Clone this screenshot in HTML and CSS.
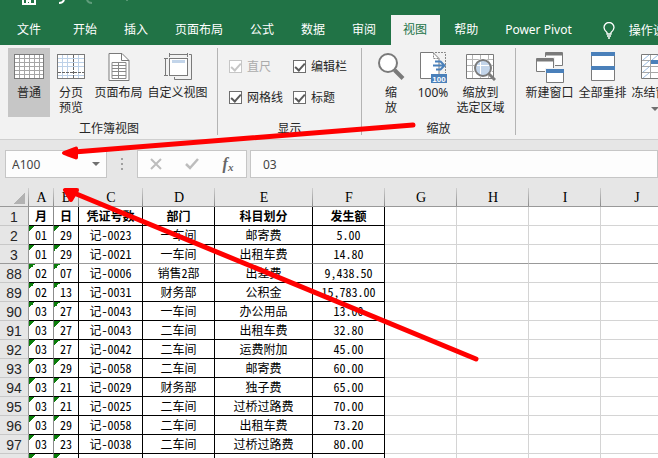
FILE: index.html
```html
<!DOCTYPE html>
<html lang="zh-CN">
<head>
<meta charset="utf-8">
<title>Excel</title>
<link rel="stylesheet" href="styles.css">
</head>
<body>
<div class="app">
  <header class="titlebar">
    <svg class="quick" width="140" height="6" viewBox="0 0 140 6" aria-hidden="true">
      <path d="M23 0V4H35V0M27 4V1H30V4" fill="none" stroke="#fff" stroke-width="2"/>
      <path d="M64 0Q63 3 59 3" fill="none" stroke="#fff" stroke-width="2"/>
      <path d="M87 0Q88 3 92 3" fill="none" stroke="#5f9c7b" stroke-width="2"/>
      <path d="M127 0v1" stroke="#8ab89e" stroke-width="1"/>
    </svg>
  </header>
  <nav class="tabs">
    <button class="tab file">文件</button>
    <button class="tab">开始</button>
    <button class="tab">插入</button>
    <button class="tab">页面布局</button>
    <button class="tab">公式</button>
    <button class="tab">数据</button>
    <button class="tab">审阅</button>
    <button class="tab active">视图</button>
    <button class="tab">帮助</button>
    <button class="tab">Power Pivot</button>
    <button class="tab tell">
      <svg width="12" height="17" viewBox="0 0 12 17" fill="none" stroke="#fff" stroke-width="1.3"><path d="M4 12V10.500Q1 8 1 5.500A5 5 0 0 1 11 5.500Q11 8 8 10.500V12ZM4 14H8M5 16H7"/></svg>
      操作说明搜索
    </button>
  </nav>

  <section class="ribbon">
    <div class="group views">
      <div class="tools">
        <button class="tool pressed">
          <svg width="30" height="33" viewBox="0 0 30 33"><rect x=".5" y="2.500" width="29" height="24" fill="#fff" stroke="#7a7a7a"/><path d="M1 6.500H29M1 10.500H29M1 14.500H29M1 18.500H29M1 22.500H29M5.500 3V26M10.500 3V26M15.500 3V26M20.500 3V26M25.500 3V26" stroke="#a6a6a6"/></svg>
          <span>普通</span>
        </button>
        <button class="tool">
          <svg width="28" height="33" viewBox="0 0 28 33"><rect x=".5" y="2.500" width="27" height="24" fill="#fff" stroke="#7a7a7a"/><path d="M1 6.500H27M1 10.500H27M1 14.500H27M1 23.500H27M5.500 3V26M10.500 3V26M21.500 3V26" stroke="#bdd1e8"/><path d="M1 20.500H27M16.500 3V26" stroke="#666" stroke-dasharray="3 1"/></svg>
          <span>分页<br>预览</span>
        </button>
        <button class="tool mid">
          <svg width="22" height="33" viewBox="0 0 22 33"><path d="M1 1.500H14L21 8.500V28.500H1Z" fill="#fff" stroke="#7a7a7a"/><path d="M13.500 1.500V8.500H21" fill="none" stroke="#7a7a7a"/><path d="M4 10.500H18V26.500H4ZM4 13.500H18M4 16.500H18M4 19.500H18M4 23.500H18M10.500 11V26" fill="none" stroke="#8a8a8a"/></svg>
          <span>页面布局</span>
        </button>
        <button class="tool wide">
          <svg width="28" height="33" viewBox="0 0 28 33"><rect x="5.500" y="6.500" width="18" height="17" fill="#fff" stroke="#7a7a7a"/><path d="M8 8H21V11H8Z" fill="#c3d5ea"/><path d="M5.500 1V5M23.500 1V5M5.500 2.500H23.500M0 6.500H4M0 23.500H4M1.500 6.500V23.500M25 2.500H27.500V27.500H10.500V25" fill="none" stroke="#7a7a7a"/></svg>
          <span>自定义视图</span>
        </button>
      </div>
      <h2>工作簿视图</h2>
    </div>

    <div class="group show">
      <div class="checks">
        <label class="off"><input type="checkbox" checked disabled>直尺</label>
        <label><input type="checkbox" checked>编辑栏</label>
        <label><input type="checkbox" checked>网格线</label>
        <label><input type="checkbox" checked>标题</label>
      </div>
      <h2>显示</h2>
    </div>

    <div class="group zoom">
      <div class="tools">
        <button class="tool">
          <svg width="28" height="33" viewBox="0 0 28 33"><circle cx="11" cy="11" r="9" fill="#fff" stroke="#7a7a7a" stroke-width="2"/><path d="M17.500 18L26 26.500" stroke="#7a7a7a" stroke-width="4"/></svg>
          <span>缩<br>放</span>
        </button>
        <button class="tool">
          <svg width="28" height="33" viewBox="0 0 28 33"><path d="M1.500 .5H14L20 6.500V26.500H1.500Z" fill="#fff" stroke="#7a7a7a"/><path d="M14.500 .5V6.500H20M16 .5H26.500V21" fill="none" stroke="#888" stroke-dasharray="2 1"/><path d="M16 9.500H21M14 13.500H25M17 17.500H21M21 9L25.500 13.500L21 18" fill="none" stroke="#4a80ba" stroke-width="2"/><rect x="12" y="22" width="16" height="9" fill="#4a80ba"/><text x="20" y="29.500" text-anchor="middle" class="badge">100</text></svg>
          <span>100%</span>
        </button>
        <button class="tool mid">
          <svg width="30" height="33" viewBox="0 0 30 33"><path d="M.5 2.500H27.500V26.500H.5Z" fill="#fff" stroke="#7a7a7a"/><path d="M1 7.500H27M1 13.500H27M1 19.500H27M6.500 3V26M14.500 3V26M22.500 3V26" stroke="#b5b5b5"/><circle cx="17" cy="16" r="7.500" fill="#c3d5ea" stroke="#fff" stroke-width="4"/><path d="M22 21L29 28" stroke="#7a7a7a" stroke-width="3"/><circle cx="17" cy="16" r="8" fill="#c3d5ea" stroke="#7a7a7a" stroke-width="2"/><path d="M11 13.500H23M14.500 10V22" stroke="#fff"/></svg>
          <span>缩放到<br>选定区域</span>
        </button>
      </div>
      <h2>缩放</h2>
    </div>

    <div class="group window">
      <div class="tools">
        <button class="tool mid">
          <svg width="28" height="33" viewBox="0 0 28 33"><g fill="#fff" stroke="#7a7a7a"><path d="M9.500 .5H26.500V13.500H9.500Z"/><path d="M10 2H26" stroke-width="3"/><path d="M.5 6.500H17.500V19.500H.5Z" stroke="#f2f2f2" stroke-width="3"/><path d="M.5 6.500H17.500V19.500H.5Z"/><path d="M1 8H17" stroke-width="3"/><path d="M10.500 17.500H27.500V30.500H10.500Z" stroke="#f2f2f2" stroke-width="3"/><path d="M10.500 17.500H27.500V30.500H10.500Z"/></g><path d="M10 19H28" stroke="#4a80ba" stroke-width="4"/></svg>
          <span>新建窗口</span>
        </button>
        <button class="tool mid">
          <svg width="24" height="33" viewBox="0 0 24 33"><path d="M.5 .5H23.500V28.500H.5Z" fill="#fff" stroke="#7a7a7a"/><path d="M0 2H24M0 16H24" stroke="#4a80ba" stroke-width="4"/></svg>
          <span>全部重排</span>
        </button>
        <button class="tool mid">
          <svg width="30" height="33" viewBox="0 0 30 33"><path d="M.5 2.500H29.500V26.500H.5Z" fill="#fff" stroke="#7a7a7a"/><path d="M1 8.500H29M1 14.500H29M1 20.500H29M9.500 3V26M19.500 3V26" stroke="#a6a6a6"/><path d="M2 8L8 3M11 8L17 3M2 14L8 9M2 20L8 15M2 26L8 21" stroke="#9dbde0"/><path d="M10 10H29" stroke="#4a80ba" stroke-width="4"/></svg>
          <span>冻结窗格<br><i class="caret"></i></span>
        </button>
      </div>
    </div>
  </section>

  <section class="formulabar">
    <div class="namebox">
      <input type="text" value="A100" aria-label="名称框">
      <button aria-label="名称列表"><i class="caret"></i></button>
    </div>
    <svg class="dots" width="2" height="12" viewBox="0 0 2 12" fill="#a0a0a0"><path d="M0 0h2v2H0zM0 5h2v2H0zM0 10h2v2H0z"/></svg>
    <div class="actions">
      <button aria-label="取消"><svg width="12" height="12" viewBox="0 0 12 12"><path d="M1 1L11 11M11 1L1 11" stroke="#bdbdbd" stroke-width="2"/></svg></button>
      <button aria-label="输入"><svg width="14" height="12" viewBox="0 0 14 12"><path d="M1 6L5 10L13 1" fill="none" stroke="#bdbdbd" stroke-width="2.500"/></svg></button>
      <button class="fx" aria-label="插入函数">f<sub>x</sub></button>
    </div>
    <input class="formula" type="text" value="03" aria-label="编辑栏">
  </section>

  <main class="sheet">
    <table>
      <colgroup><col class="w-head"><col class="w-ab"><col class="w-ab"><col class="w-c"><col class="w-std"><col class="w-e"><col class="w-std"><col class="w-std"><col class="w-std"><col class="w-std"><col class="w-std"></colgroup>
      <thead>
        <tr><th class="corner"></th><th>A</th><th>B</th><th>C</th><th>D</th><th>E</th><th>F</th><th>G</th><th>H</th><th>I</th><th>J</th></tr>
      </thead>
      <tbody>
        <tr class="titles"><th>1</th><td>月</td><td>日</td><td>凭证号数</td><td>部门</td><td>科目划分</td><td>发生额</td><td></td><td></td><td></td><td></td></tr>
        <tr><th>2</th><td>01</td><td>29</td><td>记-0023</td><td>一车间</td><td>邮寄费</td><td>5.00</td><td></td><td></td><td></td><td></td></tr>
        <tr class="frozen"><th>3</th><td>01</td><td>29</td><td>记-0021</td><td>一车间</td><td>出租车费</td><td>14.80</td><td></td><td></td><td></td><td></td></tr>
        <tr><th>88</th><td>02</td><td>07</td><td>记-0006</td><td>销售2部</td><td>出差费</td><td>9,438.50</td><td></td><td></td><td></td><td></td></tr>
        <tr><th>89</th><td>02</td><td>13</td><td>记-0031</td><td>财务部</td><td>公积金</td><td>15,783.00</td><td></td><td></td><td></td><td></td></tr>
        <tr><th>90</th><td>03</td><td>27</td><td>记-0043</td><td>一车间</td><td>办公用品</td><td>13.00</td><td></td><td></td><td></td><td></td></tr>
        <tr><th>91</th><td>03</td><td>27</td><td>记-0043</td><td>二车间</td><td>出租车费</td><td>32.80</td><td></td><td></td><td></td><td></td></tr>
        <tr><th>92</th><td>03</td><td>27</td><td>记-0042</td><td>二车间</td><td>运费附加</td><td>45.00</td><td></td><td></td><td></td><td></td></tr>
        <tr><th>93</th><td>03</td><td>29</td><td>记-0058</td><td>二车间</td><td>邮寄费</td><td>60.00</td><td></td><td></td><td></td><td></td></tr>
        <tr><th>94</th><td>03</td><td>21</td><td>记-0029</td><td>财务部</td><td>独子费</td><td>65.00</td><td></td><td></td><td></td><td></td></tr>
        <tr><th>95</th><td>03</td><td>21</td><td>记-0025</td><td>二车间</td><td>过桥过路费</td><td>70.00</td><td></td><td></td><td></td><td></td></tr>
        <tr><th>96</th><td>03</td><td>29</td><td>记-0058</td><td>二车间</td><td>出租车费</td><td>73.20</td><td></td><td></td><td></td><td></td></tr>
        <tr><th>97</th><td>03</td><td>23</td><td>记-0038</td><td>二车间</td><td>过桥过路费</td><td>80.00</td><td></td><td></td><td></td><td></td></tr>
        <tr><th></th><td></td><td></td><td></td><td></td><td></td><td></td><td></td><td></td><td></td><td></td></tr>
      </tbody>
    </table>
  </main>

  <svg class="arrows" width="658" height="458" viewBox="0 0 658 458" aria-hidden="true" stroke="#f00" stroke-width="5" stroke-linecap="round" fill="#f00">
    <path d="M413 125L74 152M476 359L74 193"/>
    <path d="M64 153L76 148.500V157.500ZM65 190L77 190L71 200Z" stroke-width="4" stroke-linejoin="round"/>
  </svg>
</div>
</body>
</html>
```
FILE: styles.css
```css
* { box-sizing: border-box; }

body {
  margin: 0;
  font: 12px/15px "Noto Sans", "Noto Sans CJK SC", sans-serif;
  color: #262626;
  background: #fff;
}

button, input {
  font: inherit;
  color: inherit;
  margin: 0;
  padding: 0;
  border: 0;
  background: none;
}

.app {
  position: relative;
  height: 100vh;
  overflow: hidden;
}

/* title bar and tabs */
.titlebar { height: 15px; background: #217346; }
.quick { display: block; }

.tabs {
  display: flex;
  gap: 2px;
  height: 30px;
  padding-left: 4px;
  background: #217346;
}
.tab {
  flex: none;
  padding: 0 13px 2px 12px;
  color: #fff;
  white-space: nowrap;
}
.tab.file { padding: 0 18px 2px 13px; }
.tab.active { background: #f2f2f2; color: #217346; }
.tab.tell { display: flex; align-items: center; gap: 14px; padding: 0 0 0 16px; }

/* ribbon */
.ribbon {
  display: flex;
  height: 95px;
  padding: 3px 0 4px;
  overflow: hidden;
  background: #f2f2f2;
  border-bottom: 1px solid #cfcfcf;
}
.group {
  flex: none;
  display: flex;
  flex-direction: column;
  justify-content: space-between;
  border-right: 1px solid #b4b4b4;
}
.group h2 {
  margin: 0;
  font-size: 12px;
  line-height: 13px;
  font-weight: normal;
  text-align: center;
}
.views { padding: 0 7px 0 8px; }
.zoom { padding: 0 8px; }
.window { padding-left: 7px; border: 0; }

.tools { display: flex; }
.tool {
  display: flex;
  flex-direction: column;
  align-items: center;
  width: 42px;
  height: 69px;
  padding-top: 4px;
  white-space: nowrap;
}
.tool svg { flex: none; display: block; }
.tool.pressed { background: #c6c6c6; }
.tool.mid { width: 53px; }
.tool.wide { width: 65px; }
.badge { font: bold 8px "Liberation Sans", sans-serif; fill: #fff; }

.caret {
  display: inline-block;
  vertical-align: middle;
  border: 4px solid transparent;
  border-top-color: #707070;
  border-bottom: 0;
}

.checks {
  display: grid;
  grid-template-columns: 64px 68px;
  row-gap: 16px;
  padding: 11px 0 0 11px;
}
.checks label { display: flex; align-items: center; gap: 5px; }
.checks .off { color: #ababab; }
.checks input {
  appearance: none;
  display: grid;
  place-items: center;
  width: 13px;
  height: 13px;
  border: 1px solid #6e6e6e;
  background: #fff;
}
.checks input::after {
  content: "";
  width: 4px;
  height: 8px;
  margin-bottom: 2px;
  border: solid #5a5a5a;
  border-width: 0 2px 2px 0;
  transform: rotate(42deg);
}
.checks .off input, .checks .off input::after { border-color: #c6c6c6; }

/* formula bar */
.formulabar {
  display: flex;
  align-items: center;
  height: 48px;
  padding: 10px 0 10px 5px;
  background: #e6e6e6;
}
.namebox, .actions, .formula {
  height: 28px;
  border: 1px solid #c6c6c6;
  background: #fdfdfd;
}
.namebox { display: flex; width: 102px; color: #444; }
.namebox input { flex: 1; min-width: 0; padding-left: 6px; }
.namebox button { width: 20px; display: grid; place-items: center; }
.dots { margin: 0 14px; }
.actions { display: flex; width: 110px; margin-right: 3px; }
.actions button { flex: 1; display: grid; place-items: center; }
.actions .fx {
  display: block;
  font: italic bold 16px "Liberation Serif", serif;
  color: #666;
}
.fx sub { font-size: 11px; line-height: 1; vertical-align: -2px; }
.formula { flex: 1; min-width: 0; padding-left: 12px; color: #444; }

/* worksheet grid */
table {
  table-layout: fixed;
  width: 673px;
  border-spacing: 0;
  font: 12px/18px "Noto Sans CJK SC", sans-serif;
  font-feature-settings: "hwid";
  color: #000;
}
.w-head { width: 29px; }
.w-ab { width: 25px; }
.w-c { width: 64px; }
.w-e { width: 98px; }
.w-std { width: 72px; }

th, td {
  height: 19px;
  padding: 0;
  text-align: center;
  white-space: nowrap;
  border-right: 1px solid #d4d4d4;
  border-bottom: 1px solid #d4d4d4;
}
thead th {
  font: 14px/16px "Liberation Serif", serif;
  padding-top: 2px;
  border-bottom-color: #999;
  border-right: 0;
  background: linear-gradient(#cfcfcf, #8c8c8c) right / 1px 100% no-repeat #e6e6e6;
}
thead .corner {
  background:
    linear-gradient(#cfcfcf, #8c8c8c) right / 1px 100% no-repeat,
    linear-gradient(135deg, transparent 50%, #b2b2b2 50%) 14px 5px / 11px 11px no-repeat #e6e6e6;
}
tbody th {
  font: 14px/16px "Liberation Sans", sans-serif;
  padding-top: 2px;
  color: #262626;
  background: #e6e6e6;
  border-right-color: #999;
  border-bottom-color: #c8c8c8;
}
td:nth-child(-n+7) { border-color: #000; }
td:nth-child(2) { border-right-color: #8c8c8c; }
.titles td { font-weight: bold; }
tr:not(.titles) td:nth-child(2),
tr:not(.titles) td:nth-child(3) {
  background: linear-gradient(135deg, #0b7d0b 50%, transparent 50%) 0 0 / 6px 6px no-repeat;
}
.frozen th, .frozen td, .frozen td:nth-child(-n+7) { border-bottom-color: #999; }

.arrows { position: absolute; top: 0; left: 0; }
```
